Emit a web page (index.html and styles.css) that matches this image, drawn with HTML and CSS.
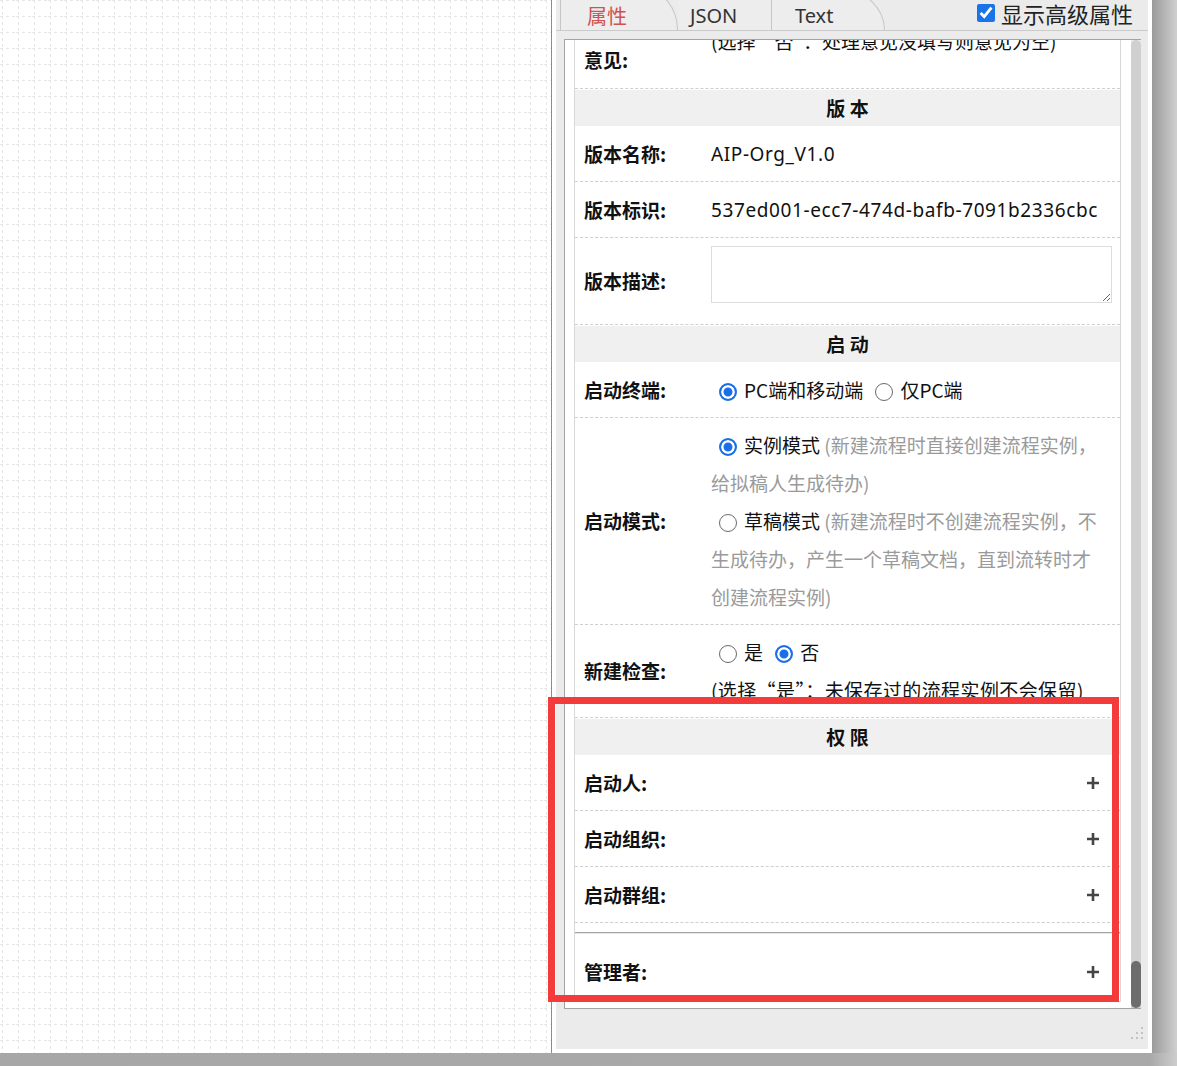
FILE: index.html
```html
<!DOCTYPE html>
<html lang="zh-CN">

<head>
    <meta charset="UTF-8">
    <meta name="viewport" content="width=device-width, initial-scale=1.0">
    <title>流程属性</title>
    <link rel="stylesheet" href="styles.css">
</head>

<body>
    <div class="stage">
        <div class="canvas">
            <svg class="grid" xmlns="http://www.w3.org/2000/svg">
                <defs>
                    <pattern id="cell" width="16" height="16" patternUnits="userSpaceOnUse">
                        <path d="M0 0.5H16" stroke="#e6e6e6" stroke-dasharray="3 3" />
                        <path d="M2.5 0V16" stroke="#e6e6e6" stroke-dasharray="3 3" />
                    </pattern>
                </defs>
                <rect width="100%" height="100%" fill="url(#cell)" />
            </svg>
        </div>

        <div class="panel">
            <div class="panel-inner">
                <div class="tab-bar">
                    <div class="tab tab-attr active">属性</div>
                    <div class="tab tab-json">JSON</div>
                    <div class="tab tab-text">Text</div>
                    <label class="adv"><input type="checkbox" checked>显示高级属性</label>
                </div>

                <div class="scroll-box">
                    <div class="viewport">
                        <div class="form">
                            <!-- 上面的行已经滚出去了 -->
                            <div class="row row-cut">
                                <div class="label">意见:</div>
                                <div class="value">
                                    <div class="line"><label><input type="radio" name="yj">是</label> <label><input type="radio" name="yj" checked>否</label></div>
                                    <div class="line">(选择“否”：处理意见没填写则意见为空)</div>
                                </div>
                            </div>

                            <div class="section">版 本</div>
                            <div class="row">
                                <div class="label">版本名称:</div>
                                <div class="value latin">AIP-Org_V1.0</div>
                            </div>
                            <div class="row">
                                <div class="label">版本标识:</div>
                                <div class="value latin">537ed001-ecc7-474d-bafb-7091b2336cbc</div>
                            </div>
                            <div class="row row-area">
                                <div class="label">版本描述:</div>
                                <div class="value"><textarea></textarea></div>
                            </div>

                            <div class="section">启 动</div>
                            <div class="row">
                                <div class="label">启动终端:</div>
                                <div class="value">
                                    <label><input type="radio" name="term" checked>PC端和移动端</label>
                                    <label><input type="radio" name="term">仅PC端</label>
                                </div>
                            </div>
                            <div class="row row-multi">
                                <div class="label">启动模式:</div>
                                <div class="value">
                                    <label class="opt"><input type="radio" name="mode" checked>实例模式 <span class="hint">(新建流程时直接创建流程实例，给拟稿人生成待办)</span></label>
                                    <label class="opt"><input type="radio" name="mode">草稿模式 <span class="hint">(新建流程时不创建流程实例，不生成待办，产生一个草稿文档，直到流转时才创建流程实例)</span></label>
                                </div>
                            </div>
                            <div class="row row-multi">
                                <div class="label">新建检查:</div>
                                <div class="value">
                                    <div class="line"><label><input type="radio" name="chk">是</label> <label><input type="radio" name="chk" checked>否</label></div>
                                    <div class="line wide">(选择“是”：未保存过的流程实例不会保留)</div>
                                </div>
                            </div>

                            <div class="section">权 限</div>
                            <div class="row">
                                <div class="label">启动人:</div>
                                <div class="value add"><svg class="plus" viewBox="0 0 12 12"><path d="M6 0V12M0 6H12" /></svg></div>
                            </div>
                            <div class="row">
                                <div class="label">启动组织:</div>
                                <div class="value add"><svg class="plus" viewBox="0 0 12 12"><path d="M6 0V12M0 6H12" /></svg></div>
                            </div>
                            <div class="row">
                                <div class="label">启动群组:</div>
                                <div class="value add"><svg class="plus" viewBox="0 0 12 12"><path d="M6 0V12M0 6H12" /></svg></div>
                            </div>
                            <div class="gap"></div>
                            <div class="row row-admin">
                                <div class="label">管理者:</div>
                                <div class="value add"><svg class="plus" viewBox="0 0 12 12"><path d="M6 0V12M0 6H12" /></svg></div>
                            </div>
                        </div>
                    </div>
                    <div class="track">
                        <div class="thumb"></div>
                    </div>
                </div>

                <div class="panel-foot">
                    <svg class="grip" viewBox="0 0 14 14">
                        <rect x="11" y="1" width="2" height="2" />
                        <rect x="6" y="6" width="2" height="2" />
                        <rect x="11" y="6" width="2" height="2" />
                        <rect x="1" y="11" width="2" height="2" />
                        <rect x="6" y="11" width="2" height="2" />
                        <rect x="11" y="11" width="2" height="2" />
                    </svg>
                </div>
            </div>
        </div>

        <div class="shade"></div>

        <!-- 标注框 -->
        <div class="mark"></div>
    </div>
</body>

</html>
```

FILE: styles.css
```css
body {
    margin: 0;
    overflow: hidden;
    background: linear-gradient(to right, #a7a7a7 0, #a9a9a9 1150px, #cdcdcd 100%);
    font-family: "Noto Sans CJK SC", "Noto Sans", sans-serif;
    font-size: 19px;
    color: #111;
}

.stage {
    position: relative;
    display: flex;
    height: 1053px;
}

.canvas {
    flex: none;
    width: 551px;
    background-color: #fff;
}

.grid {
    display: block;
    width: 100%;
    height: 100%;
}

.panel {
    flex: none;
    width: 601px;
    box-sizing: border-box;
    border-left: 1px solid #8c8c8c;
    padding: 0 4px 4px;
    background-color: #fff;
}

.panel-inner {
    height: 100%;
    background-color: #ebebeb;
    display: flex;
    flex-direction: column;
}

.shade {
    flex: 1;
    background: linear-gradient(to right, #9b9b9b, #cfcfcf);
}

/* tabs */
.tab-bar {
    flex: none;
    height: 31px;
    box-sizing: border-box;
    border-bottom: 1px solid #cbcbcb;
    display: flex;
    align-items: flex-start;
    padding-left: 4px;
}

.tab {
    flex: none;
    height: 40px;
    margin-top: -10px;
    box-sizing: border-box;
    padding-top: 10px;
    line-height: 30px;
    font-family: "Noto Sans", "Noto Sans CJK SC", sans-serif;
    font-size: 20px;
    color: #333;
    background-color: #ededed;
    border-top: 1px solid #c6c6c6;
}

.tab.active {
    color: #d0524e;
    font-family: "Noto Sans CJK SC", sans-serif;
}

.tab-attr {
    width: 118px;
    padding-left: 26px;
    border-left: 1px solid #c6c6c6;
    border-right: 1px solid #c6c6c6;
    border-top-right-radius: 32px 40px;
    position: relative;
    z-index: 2;
}

.tab-json {
    width: 94px;
    padding-left: 12px;
    border-right: 1px solid #c6c6c6;
}

.tab-text {
    width: 113px;
    padding-left: 23px;
    border-right: 1px solid #c6c6c6;
    border-top-right-radius: 44px 42px;
}

.adv {
    margin-left: auto;
    padding-right: 15px;
    height: 26px;
    display: flex;
    align-items: center;
    font-size: 22px;
    color: #222;
}

.adv input {
    width: 18px;
    height: 18px;
    margin: 0 6px 0 0;
    accent-color: #1a73e8;
}

/* scroll area */
.scroll-box {
    flex: none;
    height: 970px;
    width: 577px;
    box-sizing: border-box;
    margin: 8px 0 0 8px;
    border: 1px solid #a3a3a3;
    border-right: none;
    display: flex;
}

.viewport {
    flex: 1;
    overflow: hidden;
    background-color: #fff;
    padding: 0 10px 0 9px;
}

.track {
    flex: none;
    width: 10px;
    background-color: #d0d0d0;
    border-radius: 5px 5px 0 0;
    display: flex;
    flex-direction: column;
    justify-content: flex-end;
}

.thumb {
    height: 47px;
    border-radius: 5px;
    background-color: #6d6d6d;
}

.panel-foot {
    flex: 1;
    display: flex;
    justify-content: flex-end;
    align-items: flex-end;
    padding: 0 4px 9px 0;
}

.grip {
    width: 14px;
    height: 14px;
    fill: #c3c3c3;
}

/* form */
.form {
    margin-top: -64px;
    border-left: 1px solid #d8d8d8;
    border-right: 1px solid #d8d8d8;
    border-bottom: 1px solid #d8d8d8;
}

.row {
    display: flex;
    border-bottom: 1px dashed #cfcfcf;
}

.label {
    flex: none;
    width: 136px;
    box-sizing: border-box;
    padding-left: 9px;
    align-self: center;
    font-weight: bold;
    line-height: 38px;
    color: #111;
}

.value {
    flex: 1;
    min-width: 0;
    padding: 9px 8px 8px 0;
    line-height: 38px;
}

.latin {
    font-family: "Noto Sans", "Noto Sans CJK SC", sans-serif;
    letter-spacing: 0.6px;
}

.wide {
    letter-spacing: 0.4px;
}

.row-cut .value {
    padding: 8px 8px 28px 0;
}

.row-cut .label {
    align-self: flex-end;
    padding-bottom: 9px;
}

.row-area .value {
    padding: 8px 8px 21px 0;
}

.row-area textarea {
    display: block;
    width: 100%;
    height: 57px;
    box-sizing: border-box;
    border: 1px solid #dcdcdc;
    resize: both;
    font-family: inherit;
}

.row-multi .value {
    padding: 8px 8px 8px 0;
}

.row-multi:last-of-type .value {
    padding-bottom: 9px;
}

.opt {
    display: block;
    max-width: 395px;
}

.hint {
    color: #9a9a9a;
}

input[type="radio"] {
    appearance: none;
    width: 18px;
    height: 18px;
    box-sizing: border-box;
    margin: 0 7px 0 8px;
    vertical-align: -3px;
    border: 1.5px solid #6a6a6a;
    border-radius: 50%;
    background-color: #fff;
}

input[type="radio"]:checked {
    border: 2px solid #1a6fe6;
    background-color: #1a6fe6;
    box-shadow: inset 0 0 0 2.5px #fff;
}

.section {
    margin-top: 1px;
    height: 36px;
    line-height: 36px;
    background-color: #f0f0f0;
    text-align: center;
    font-weight: bold;
}

.add {
    display: flex;
    justify-content: flex-end;
    align-items: center;
    min-height: 38px;
}

.plus {
    width: 12px;
    height: 12px;
    margin-right: 13px;
    stroke: #454545;
    stroke-width: 2.6;
}

.gap {
    height: 9px;
}

.row-admin {
    border-bottom: none;
    border-top: 1px solid #a5a5a5;
    box-shadow: inset 0 1px 0 #e6e6e6;
}

.row-admin .value {
    padding: 20px 8px 10px 0;
}

.row-admin .label {
    align-self: flex-end;
    padding-bottom: 10px;
}

.mark {
    position: absolute;
    left: 548px;
    top: 697px;
    width: 571px;
    height: 305px;
    box-sizing: border-box;
    border: 7px solid #f33b3b;
    pointer-events: none;
}
```
